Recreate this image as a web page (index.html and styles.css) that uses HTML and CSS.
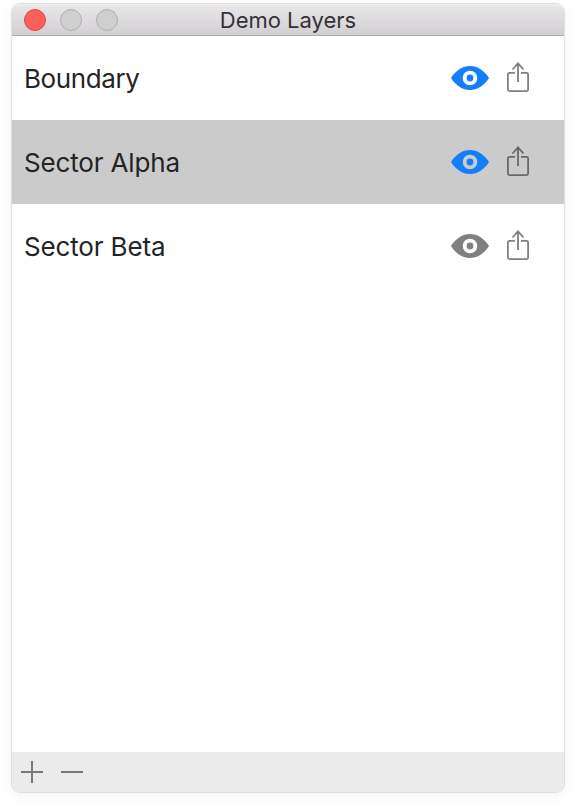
FILE: index.html
```html
<!DOCTYPE html>
<html lang="en">
<head>
<meta charset="utf-8">
<title>Demo Layers</title>
<link rel="stylesheet" href="styles.css">
</head>
<body>
<svg width="0" height="0" class="defs" aria-hidden="true">
  <symbol id="eye" viewBox="0 0 38 24">
    <path fill="currentColor" fill-rule="evenodd" d="M0 12C4.700 4.500 11.500 0 19 0S33.300 4.500 38 12C33.300 19.500 26.500 24 19 24S4.700 19.500 0 12ZM19 4.700a7.300 7.300 0 1 0 0 14.600a7.300 7.300 0 1 0 0-14.600Z"/>
    <circle cx="19" cy="12" r="3.400" fill="currentColor"/>
  </symbol>
  <symbol id="share" viewBox="0 0 24 32">
    <path fill="none" stroke="currentColor" stroke-width="1.800" d="M9 10.900H3.400Q1.900 10.900 1.900 12.400V27.600Q1.900 29.100 3.400 29.100H20.600Q22.100 29.100 22.100 27.600V12.400Q22.100 10.900 20.600 10.900H15M12 20V1.300M6.500 7.500L12 1.300L17.500 7.500"/>
  </symbol>
</svg>
<main class="window">
  <header class="titlebar">
    <div class="controls"><span class="dot close"></span><span class="dot"></span><span class="dot"></span></div>
    <h1 class="title">Demo Layers</h1>
  </header>
  <ul class="layers">
    <li class="layer"><span class="name boundary">Boundary</span><svg class="eye on"><use href="#eye"/></svg><svg class="share"><use href="#share"/></svg></li>
    <li class="layer selected"><span class="name">Sector Alpha</span><svg class="eye on"><use href="#eye"/></svg><svg class="share"><use href="#share"/></svg></li>
    <li class="layer"><span class="name">Sector Beta</span><svg class="eye"><use href="#eye"/></svg><svg class="share"><use href="#share"/></svg></li>
  </ul>
  <footer class="toolbar">
    <svg class="tool" viewBox="0 0 22 22"><path d="M0 11H22M11 0V22"/></svg>
    <svg class="tool" viewBox="0 0 22 22"><path d="M0 11H22"/></svg>
  </footer>
</main>
</body>
</html>
```
FILE: styles.css
```css
* { box-sizing: border-box; }
body {
  margin: 0;
  padding: 4px 12px 20px;
  height: 812px;
  overflow: hidden;
  background: #fff;
  font-family: Inter, "Liberation Sans", sans-serif;
  color: #242424;
}
.defs { position: absolute; }
.window {
  display: flex;
  flex-direction: column;
  height: 788px;
  border-radius: 8px;
  overflow: hidden;
  background: #fff;
  box-shadow: 0 0 0 1px #dedede, 0 4px 16px rgba(0, 0, 0, 0.05);
}
.titlebar {
  display: grid;
  grid-template-columns: 120px 1fr 120px;
  align-items: center;
  height: 32px;
  flex: none;
  background: linear-gradient(#f3f2f3 0, #e7e5e7 3px, #d1cfd1 100%);
  border-bottom: 1px solid #acaaac;
}
.controls { display: flex; gap: 14px; padding-left: 12px; padding-top: 1px; }
.dot {
  width: 22px;
  height: 22px;
  border-radius: 50%;
  background: #d0cfd0;
  border: 1px solid #b0afb0;
}
.close { background: #fc605c; border-color: #df4744; }
.title {
  margin: 0;
  padding-top: 1px;
  font-size: 22px;
  font-weight: 400;
  line-height: 30px;
  text-align: center;
  white-space: nowrap;
  color: #343238;
}
.layers { flex: 1; margin: 0; padding: 0; list-style: none; }
.layer {
  display: flex;
  align-items: center;
  height: 84px;
  padding: 0 34px 0 12px;
}
.selected { background: #cbcbcb; }
.name { flex: 1; padding-top: 2px; font-size: 26px; line-height: 32px; letter-spacing: -0.15px; }
.boundary { letter-spacing: -0.4px; }
.eye { width: 38px; height: 24px; margin-right: 17px; color: #808080; }
.on { color: #147efb; }
.share { width: 24px; height: 32px; color: #808080; }
.selected .share { color: #686868; }
.toolbar {
  display: flex;
  align-items: center;
  gap: 18px;
  height: 40px;
  flex: none;
  padding-left: 9px;
  background: #ebebeb;
}
.tool { width: 22px; height: 22px; fill: none; stroke: #787878; stroke-width: 2; }
```
